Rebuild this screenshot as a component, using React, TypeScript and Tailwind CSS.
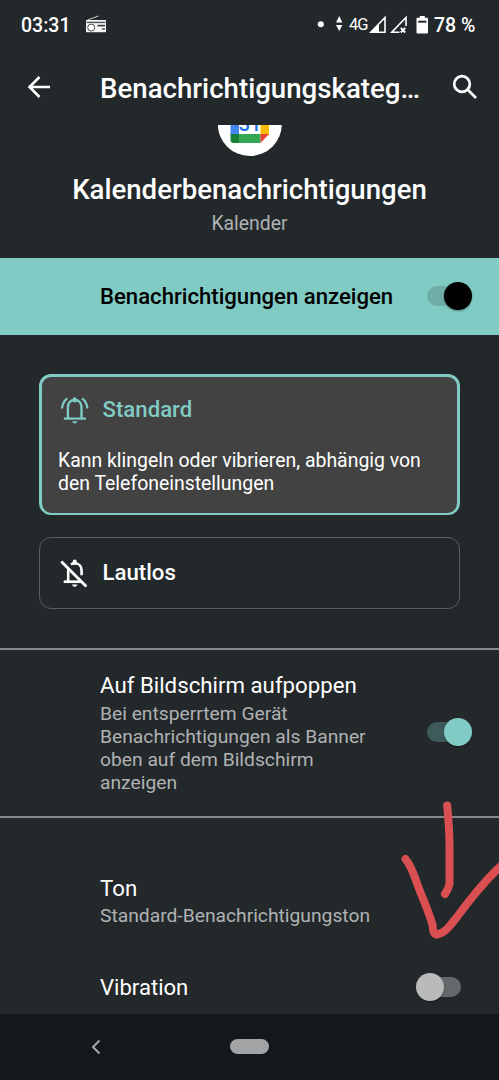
import React from 'react';

type SwitchProps = { tone: 'black' | 'teal' | 'off' };

function Switch({ tone }: SwitchProps) {
  const off = tone === 'off';
  const track = tone === 'black' ? 'bg-[#6fada6]' : off ? 'bg-[#64696b]' : 'bg-[#3f5a5a]';
  const thumb = tone === 'black' ? 'bg-black' : off ? 'bg-[#bababa]' : 'bg-[#80cbc4]';
  return (
    <div className={`flex h-5 w-[45px] shrink-0 items-center rounded-full ${track} ${off ? 'justify-start' : 'justify-end'}`}>
      <div className={`size-7 shrink-0 rounded-full shadow-[0_1px_2px_rgba(0,0,0,0.4)] ${thumb}`} />
    </div>
  );
}

function RadioIcon() {
  return (
    <svg width="22" height="18" viewBox="0 0 22 18" className="mt-[-3px] ml-[14px]">
      <path d="M2.500 5 13.500 1" stroke="#d0d0d0" strokeWidth="1" />
      <rect x="1" y="5" width="20" height="12.200" rx=".6" fill="#f4f4f4" />
      <path d="M1.500 7.400H20.500" stroke="#54585a" strokeWidth="1.400" />
      <circle cx="6.200" cy="12.600" r="3.500" fill="#fff" stroke="#4a4e50" strokeWidth="1" />
      <path d="M12.500 10.600H20" stroke="#34393b" strokeWidth="1.600" />
      <path d="M17 14h3" stroke="#4a4e50" strokeWidth="1.400" />
    </svg>
  );
}

function StatusBar() {
  return (
    <header className="flex h-[50px] items-center pl-[21px] text-[19.500px] font-medium leading-6">
      <span className="mt-[2px] w-[50px]">03:31</span>
      <RadioIcon />
      <svg width="30" height="22" viewBox="0 0 30 22" fill="#fff" className="ml-[207px]">
        <circle cx="6.800" cy="10.200" r="3" />
        <path d="M22 8.500 25.200 2 28.400 8.500zM22 11h6.400L25.200 17z" />
      </svg>
      <span className="ml-[5px] mt-[-1px] w-[20px] text-[16.500px] font-normal tracking-[-1px]">4G</span>
      <svg width="62" height="22" viewBox="0 0 62 22">
        <path d="M1.800 18.300 16 3.500v14.800z" fill="none" stroke="#fff" strokeWidth="1.600" />
        <path d="M1 18.700 10 9.500V18.700z" fill="#fff" />
        <path d="M30.500 18.300H22.800L37 3.500v8.500" fill="none" stroke="#fff" strokeWidth="1.600" />
        <path d="m31.800 13.800 4.400 4.700m0-4.700-4.400 4.700" stroke="#fff" strokeWidth="1.900" />
        <path d="M49.200 3.800h1.600V2h5v1.800h2.200q1 0 1 1v13.700q0 1-1 1h-9.500q-1 0-1-1V4.800q0-1 1-1z" fill="#fff" />
        <path d="M49.300 7.700h8" stroke="#23282b" strokeWidth="2" />
      </svg>
      <span className="ml-[3px] mt-[2px] whitespace-nowrap">78 %</span>
    </header>
  );
}

function BellRing() {
  return (
    <svg width="30" height="30" viewBox="0 0 30 30" fill="none" stroke="#80cbc4" className="shrink-0">
      <path d="M7.900 23V12.500C7.900 8 10.500 5 14.700 5S21.500 8 21.500 12.500V23" strokeWidth="2.400" />
      <path d="M3.800 23.600H26" strokeWidth="2.200" />
      <path d="M14.700 5.500V4.300" strokeWidth="4" strokeLinecap="round" />
      <path d="M12.200 26.300h5q-.5 2.200-2.500 2.200t-2.500-2.200z" fill="#80cbc4" stroke="none" />
      <path d="M2 13.500Q2.500 7 7.300 3.400M27.400 13.500Q26.900 7 22.100 3.400" strokeWidth="2.300" />
    </svg>
  );
}

function BellOff() {
  return (
    <svg width="30" height="30" viewBox="0 0 30 30" fill="none" stroke="#fff" className="shrink-0">
      <path d="M8.200 23.500V13q0-1.500.6-3" strokeWidth="2.600" />
      <path d="M3.700 23.700H21" strokeWidth="2.700" />
      <path d="M11 6.500Q12.800 5.300 14.700 5.300C19 5.300 21.600 8.500 21.600 12.500V17.300" strokeWidth="2.600" />
      <path d="M14.700 5V3.600" strokeWidth="4" strokeLinecap="round" />
      <path d="M12 26.400h5.400q-.6 2.400-2.700 2.400T12 26.400z" fill="#fff" stroke="none" />
      <path d="M1.300 3.500 26.300 28.500" strokeWidth="2.800" />
    </svg>
  );
}

function CalendarBadge() {
  return (
    <div className="flex h-[31px] w-16 items-end overflow-hidden">
      <svg width="64" height="64" viewBox="0 0 64 64" className="shrink-0">
        <circle cx="31.800" cy="32" r="32" fill="#fff" />
        <path d="M12.500 16h8.500v27h-8.500z" fill="#4285f4" />
        <path d="M42.500 16h8.500v27h-8.500z" fill="#fbbc04" />
        <path d="M12.500 42H21v9h-5.500q-3 0-3-3z" fill="#188038" />
        <path d="M21 42h21.500v9H21z" fill="#34a853" />
        <path d="M42.500 42H51L42.500 51z" fill="#ea4335" />
        <text x="32" y="38.500" textAnchor="middle" fontSize="20" fontFamily="Roboto" fontWeight="500" fill="#1a73e8">31</text>
      </svg>
    </div>
  );
}

function RedArrow() {
  return (
    <svg className="pointer-events-none absolute left-[395px] top-[795px]" width="104" height="150" viewBox="0 0 104 150" fill="none" stroke="#da5052" strokeWidth="8" strokeLinecap="round" strokeLinejoin="round">
      <path d="M52.200 10.500C53.500 25 54.500 37 54.500 50L54.500 89Q53 95 50 99" />
      <path d="M10.500 64C17 72 19 80 23 91C29 107 34 117 37.500 130Q38 140 42 139.500C50 138 55 131 62 122C76 103 91 84 108 69" />
    </svg>
  );
}

export default function App() {
  return (
    <div className="relative flex h-[1080px] w-[499px] flex-col overflow-hidden bg-[#23282b] font-['Roboto',sans-serif] text-white">
      <StatusBar />
      <div className="flex h-[75px] items-center pl-[27px] pr-[21px]">
        <svg width="24" height="24" viewBox="0 0 24 24" fill="none" stroke="#fff" strokeWidth="2.600" className="mt-[-1px]">
          <path d="M23 12H3M12.500 2 2.500 12l10 10" />
        </svg>
        <h1 className="ml-[49px] mt-[3px] w-[330px] whitespace-nowrap text-[27.650px] font-medium leading-8">Benachrichtigungskateg…</h1>
        <svg width="26" height="26" viewBox="0 0 26 26" fill="none" stroke="#fff" strokeWidth="2.700" className="ml-auto mt-[-2px] shrink-0">
          <circle cx="10" cy="10" r="7.800" />
          <path d="m15.500 15.500 8.500 8.500" />
        </svg>
      </div>

      <section className="flex h-[132.500px] flex-col items-center">
        <CalendarBadge />
        <h2 className="mt-[18px] text-[27.600px] font-medium leading-8">Kalenderbenachrichtigungen</h2>
        <p className="mt-[6px] text-[19.400px] leading-6 text-[#b0b2b3]">Kalender</p>
      </section>

      <section className="flex h-[77.500px] items-center justify-between bg-[#80cbc4] pl-[100px] pr-[27px] text-[22.150px] font-medium text-black">
        <span className="mt-[1px]">Benachrichtigungen anzeigen</span>
        <Switch tone="black" />
      </section>

      <section className="flex h-[312.500px] flex-col px-[39px] pt-[39px]">
        <div className="h-[141px] rounded-[12px] border-3 border-b-2 border-[#80cbc4] bg-[#424242] pl-[16px] pt-[18px]">
          <div className="flex h-[30px] items-center gap-[12.500px] pl-[2px] text-[22.200px] font-medium text-[#80cbc4]">
            <BellRing />
            <span>Standard</span>
          </div>
          <p className="mt-[24px] whitespace-nowrap text-[19.430px] leading-[23px]">
            Kann klingeln oder vibrieren, abhängig von
            <br />
            den Telefoneinstellungen
          </p>
        </div>
        <div className="mt-[22px] flex h-[72px] items-center gap-[12.500px] rounded-[12px] border border-[#5b5f61] pl-[20px] text-[22.200px] font-medium">
          <BellOff />
          <span>Lautlos</span>
        </div>
      </section>

      <section className="flex h-[169px] items-center justify-between border-t-2 border-[#85888a] pl-[100px] pr-[27px]">
        <div className="mt-[-2px]">
          <h3 className="text-[22.250px] leading-[28px]">Auf Bildschirm aufpoppen</h3>
          <p className="mt-[3px] text-[19.250px] leading-[23px] text-[#b0b2b3]">
            Bei entsperrtem Gerät
            <br />
            Benachrichtigungen als Banner
            <br />
            oben auf dem Bildschirm
            <br />
            anzeigen
          </p>
        </div>
        <div className="mt-[-3px]">
          <Switch tone="teal" />
        </div>
      </section>

      <section className="mt-[-1px] h-[198px] border-t-2 border-[#85888a] pl-[100px] pt-[56px]">
        <h3 className="text-[22.250px] leading-[28px]">Ton</h3>
        <p className="mt-[1px] text-[19.250px] leading-[26px] text-[#b0b2b3]">Standard-Benachrichtigungston</p>
        <div className="mt-[43px] flex h-[30px] items-center justify-between pr-[38px]">
          <h3 className="mt-[2px] text-[22.100px]">Vibration</h3>
          <Switch tone="off" />
        </div>
      </section>

      <nav className="flex grow items-center bg-[#15181a] pl-[91px]">
        <svg width="10" height="16" viewBox="0 0 10 16" fill="none" stroke="#a5a7a8" strokeWidth="2">
          <path d="M8.500 1.500 2 8l6.500 6.500" />
        </svg>
        <div className="ml-[129px] h-[15px] w-[39px] rounded-full bg-[#a2a3a4]" />
      </nav>
      <RedArrow />
    </div>
  );
}
